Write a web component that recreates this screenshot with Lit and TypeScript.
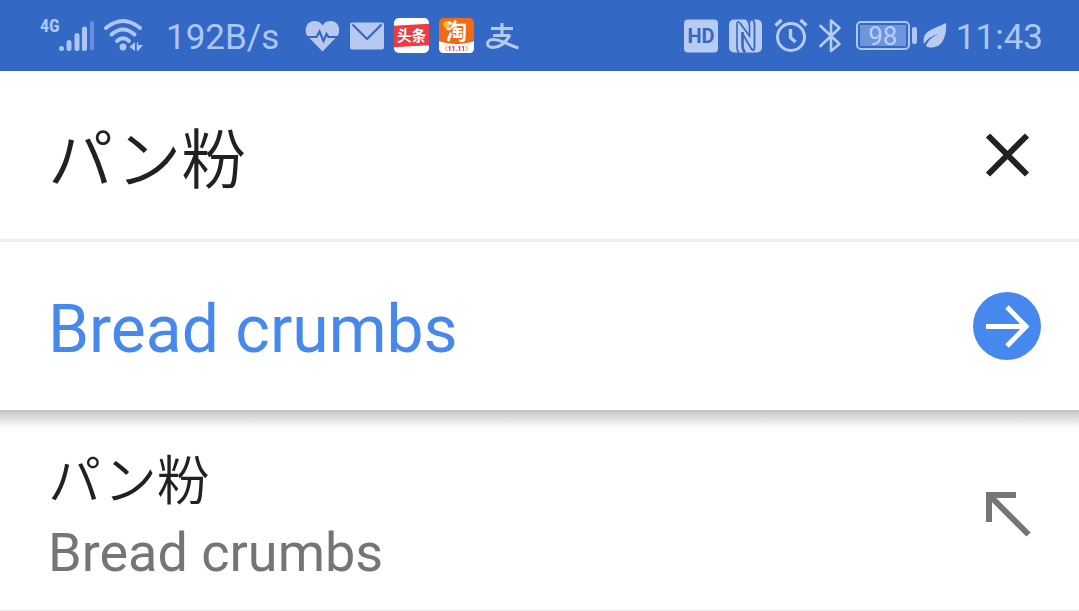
import { LitElement, html, css } from "lit";
import { customElement, property, state } from "lit/decorators.js";

@customElement("status-bar")
export class StatusBar extends LitElement {
  static styles = css`
    :host {
      display: flex;
      justify-content: space-between;
      align-items: center;
      box-sizing: border-box;
      height: 71px;
      padding: 0 36px 0 40px;
      background: #3369c4;
      color: #adc6f7;
      font-family: Roboto, sans-serif;
    }
    .group {
      display: flex;
      align-items: center;
    }
    .mobile {
      display: flex;
      align-items: flex-start;
      height: 36px;
    }
    .network {
      width: 18px;
      font: bold 18px/16px "Liberation Sans Narrow", "Roboto Condensed", Roboto, sans-serif;
    }
    .wifi {
      margin-left: 10px;
    }
    .reading {
      font-size: 35px;
      line-height: 40px;
      padding-top: 4px;
    }
    .speed {
      margin-left: 22px;
    }
    .apps {
      display: flex;
      align-items: center;
      gap: 10px;
      margin-left: 26px;
    }
    .clock {
      margin-left: 9px;
    }
    .system {
      display: flex;
      align-items: center;
      gap: 11px;
    }
    svg {
      display: block;
      flex: none;
      overflow: visible;
    }
    .cjk {
      font-family: "Noto Sans CJK SC", sans-serif;
      font-weight: 700;
    }
    .latin {
      font-family: Roboto, sans-serif;
    }
    .battery {
      display: flex;
      align-items: center;
      gap: 2px;
      margin-left: 3px;
    }
    .cell {
      box-sizing: border-box;
      width: 54px;
      height: 29px;
      padding: 2px;
      border: 2px solid #adc6f7;
      border-radius: 5px;
    }
    .charge {
      height: 21px;
      background: #6c95da;
      color: #b9cff9;
      font-size: 26px;
      line-height: 22px;
      text-align: center;
    }
    .tip {
      width: 5px;
      height: 17px;
      border-radius: 2px;
      background: #adc6f7;
    }
    .leaf {
      margin-left: 6px;
    }
  `;

  render() {
    return html`
      <div class="group">
        <div class="mobile">
          <span class="network">4G</span>
          <svg width="36" height="36" viewBox="0 0 36 36" stroke="#adc6f7" stroke-width="5" stroke-linecap="round" aria-label="Signal">
            <path d="M3.500 30.500V30.600M11 24.500V30.500M19 17.500V30.500M26.500 11V30.500" />
            <path d="M34 5V30.500" stroke="#638fdc" stroke-width="4" />
          </svg>
        </div>
        <svg class="wifi" width="40" height="36" viewBox="0 0 40 36" fill="none" stroke="#adc6f7" stroke-width="4" stroke-linecap="round" aria-label="Wi-Fi">
          <path d="M2 10Q19-4 36 10M7.500 16.500Q19 6.500 30.500 16.500M13 23Q19 17.500 25 23" />
          <circle cx="19" cy="29" r="3.400" fill="#adc6f7" stroke="none" />
          <path d="M31 24V33L25.500 29ZM33 24V33M33 27H39L34 33Z" fill="#adc6f7" stroke="none" />
          <path d="M33.500 25V32" stroke-width="1.500" />
        </svg>
        <span class="reading speed">192B/s</span>
        <div class="apps">
          <svg width="35" height="36" viewBox="0 0 35 36" aria-label="Health">
            <path d="M17.500 33.500L2.500 18C-1 13.500 .5 3 9.500 3C13.500 3 16 5 17.500 7.500C19 5 21.500 3 25.500 3C34.500 3 36 13.500 32.500 18Z" fill="#b7c9ee" />
            <path d="M1 19H11.500L14.500 13.500L18.500 23L21.500 16L23.500 19H34" fill="none" stroke="#3369c4" stroke-width="2.200" />
          </svg>
          <svg width="34" height="36" viewBox="0 0 34 36" aria-label="Mail">
            <rect x="0" y="4.500" width="34" height="27" rx="2" fill="#b7c9ee" />
            <path d="M2.500 6.500L17 21L31.500 6.500" fill="none" stroke="#3369c4" stroke-width="2.200" />
          </svg>
          <svg width="35" height="35" viewBox="0 0 36 36">
            <rect width="36" height="36" rx="5" fill="#fff" />
            <path d="M0 8L36 6V28L0 30Z" fill="#e93c45" />
            <text class="cjk" x="18" y="24" font-size="15" text-anchor="middle" fill="#fff">头条</text>
          </svg>
          <svg width="35" height="35" viewBox="0 0 36 36">
            <rect width="36" height="36" rx="5" fill="#f26a15" />
            <path d="M0 24Q18 30 36 24V31Q36 36 31 36H5Q0 36 0 31Z" fill="#fff" />
            <circle cx="8" cy="6.500" r="3.500" fill="#ffc40d" />
            <text class="cjk" x="18" y="22" font-size="22" text-anchor="middle" fill="#fff">淘</text>
            <text class="latin" x="18" y="34" font-size="7" font-weight="700" text-anchor="middle" fill="#c4224a">11.11</text>
            <path d="M8.500 29L6.500 31.500L8.500 34M27.500 29L29.500 31.500L27.500 34" fill="none" stroke="#ee7744" stroke-width="1" />
          </svg>
          <svg width="36" height="36" viewBox="0 0 36 36" fill="none" stroke="#b7c9ee" stroke-width="3" aria-label="Alipay">
            <path d="M7 10.500H29M18 5V17M9 17.500H26" />
            <path d="M26 17C22 24 16 29.500 9 29.500C1 29.500 2 21 10 21.500C18 22 24 27 34.500 30" />
          </svg>
        </div>
      </div>
      <div class="group">
        <div class="system">
          <svg width="34" height="36" viewBox="0 0 34 36">
            <rect x="0" y="1.500" width="34" height="33" rx="4" fill="#b7cbf3" />
            <text class="latin" x="17" y="25" font-size="20" font-weight="700" text-anchor="middle" fill="#3369c4">HD</text>
          </svg>
          <svg width="34" height="36" viewBox="0 0 34 36" aria-label="NFC">
            <rect x="0" y="1.500" width="33" height="33" rx="5" fill="#b7cbf3" />
            <path d="M10 34.500Q8 33 8 30V6Q8 2 11 5L20.500 18V8Q20.500 5 18 1.500H23.500Q20.500 1.500 20.500 5" fill="none" stroke="#3369c4" stroke-width="1.600" />
            <path d="M13.500 14V28Q13.500 31 16 34.500" fill="none" stroke="#3369c4" stroke-width="2.600" />
            <path d="M13 15L22.500 31Q25.500 34 25.500 29V6Q25.500 3 23.500 1.500" fill="none" stroke="#3369c4" stroke-width="1.800" />
          </svg>
          <svg width="34" height="36" viewBox="0 0 34 36" fill="none" stroke="#b7cbf3" stroke-width="3" aria-label="Alarm">
            <circle cx="17" cy="19" r="13.500" />
            <path d="M16.500 11V19.500L21.500 24M1.500 7.500L7.500 2M26.500 2L32.500 7.500" stroke-width="3.400" />
          </svg>
          <svg width="23" height="36" viewBox="0 0 23 36" fill="none" stroke="#b7cbf3" stroke-width="2.600" stroke-linejoin="round" stroke-linecap="round" aria-label="Bluetooth">
            <path d="M1.500 8L20.500 26L12 33V2.500L20.500 10L1.500 28" />
          </svg>
          <div class="battery">
            <div class="cell"><div class="charge">98</div></div>
            <div class="tip"></div>
          </div>
        </div>
        <svg class="leaf" width="24" height="26" viewBox="0 0 24 26" aria-label="Power saving">
          <path d="M23 0C24 12 20 24 9 24.500Q5 24.800 3 23Q5 16 15 11Q5 14 1 21C-2 7 12 6 23 0Z" fill="#b7cbf3" />
        </svg>
        <span class="reading clock">11:43</span>
      </div>
    `;
  }
}

@customElement("suggestion-row")
export class SuggestionRow extends LitElement {
  @property() source = "";
  @property() translation = "";

  static styles = css`
    :host {
      display: block;
    }
    .row {
      display: flex;
      align-items: center;
      justify-content: space-between;
      box-sizing: border-box;
      min-height: 201px;
      padding: 10px 48px 0;
      border-bottom: 1px solid #e8e8e8;
      color: #757575;
      font: 54px/72px Roboto, "Noto Sans CJK JP", sans-serif;
      text-decoration: none;
    }
    .text {
      display: grid;
      gap: 4px;
    }
    .source {
      color: #212121;
      font-family: "Noto Sans CJK JP", sans-serif;
      font-size: 53px;
      font-weight: 350;
    }
    svg {
      display: block;
      flex: none;
    }
  `;

  render() {
    return html`
      <a class="row" href="#suggestion">
        <span class="text">
          <span class="source" lang="ja">${this.source}</span>
          <span>${this.translation}</span>
        </span>
        <svg width="46" height="46" viewBox="0 0 46 46" fill="none" stroke="#757575" stroke-width="6" aria-hidden="true">
          <path d="M31 3H4V30M4 3L43.500 42.500" />
        </svg>
      </a>
    `;
  }
}

@customElement("app-root")
export class AppRoot extends LitElement {
  @state() private query = "パン粉";

  static styles = css`
    :host {
      display: block;
      background: #fff;
      color: #212121;
      font-family: Roboto, "Noto Sans CJK JP", sans-serif;
    }
    .row {
      display: flex;
      align-items: center;
      box-sizing: border-box;
      height: 168px;
      padding: 0 38px 0 48px;
    }
    .search {
      border-bottom: 3px solid #eeeeee;
      height: 171px;
    }
    .query {
      flex: 1;
      min-width: 0;
      height: 100px;
      padding: 0;
      border: 0;
      outline: 0;
      background: none;
      color: inherit;
      font: 350 65px/100px "Noto Sans CJK JP", sans-serif;
    }
    .icon {
      flex: none;
      padding: 0;
      border: 0;
      background: none;
      cursor: pointer;
    }
    svg {
      display: block;
    }
    .result {
      position: relative;
      justify-content: space-between;
    }
    .result::after {
      content: "";
      position: absolute;
      top: 100%;
      left: 0;
      right: 0;
      height: 20px;
      background: linear-gradient(#c2c2c2, #dedede 40%, #f8f8f8 80%, #fff);
      pointer-events: none;
    }
    .translation {
      color: #4688ec;
      font-size: 66px;
      line-height: 80px;
      padding-top: 8px;
    }
  `;

  private onInput(event: Event) {
    this.query = (event.target as HTMLInputElement).value;
  }

  private clear() {
    this.query = "";
  }

  render() {
    return html`
      <status-bar></status-bar>
      <main>
        <div class="row search">
          <input class="query" type="text" lang="ja" aria-label="Text to translate" .value=${this.query} @input=${this.onInput} />
          <button class="icon" type="button" aria-label="Clear" @click=${this.clear}>
            <svg width="68" height="68" viewBox="0 0 68 68" stroke="#212121" stroke-width="6">
              <path d="M15 14.500L54 53.500M54 14.500L15 53.500" />
            </svg>
          </button>
        </div>
        <div class="row result">
          <span class="translation">Bread crumbs</span>
          <button class="icon" type="button" aria-label="Open translation">
            <svg width="68" height="68" viewBox="0 0 68 68" fill="none">
              <circle cx="34" cy="34" r="34" fill="#4688ee" />
              <path d="M13 34.500H52M34 15L53 34.500L34 54" stroke="#fff" stroke-width="5" />
            </svg>
          </button>
        </div>
        <suggestion-row source="パン粉" translation="Bread crumbs"></suggestion-row>
      </main>
    `;
  }
}
